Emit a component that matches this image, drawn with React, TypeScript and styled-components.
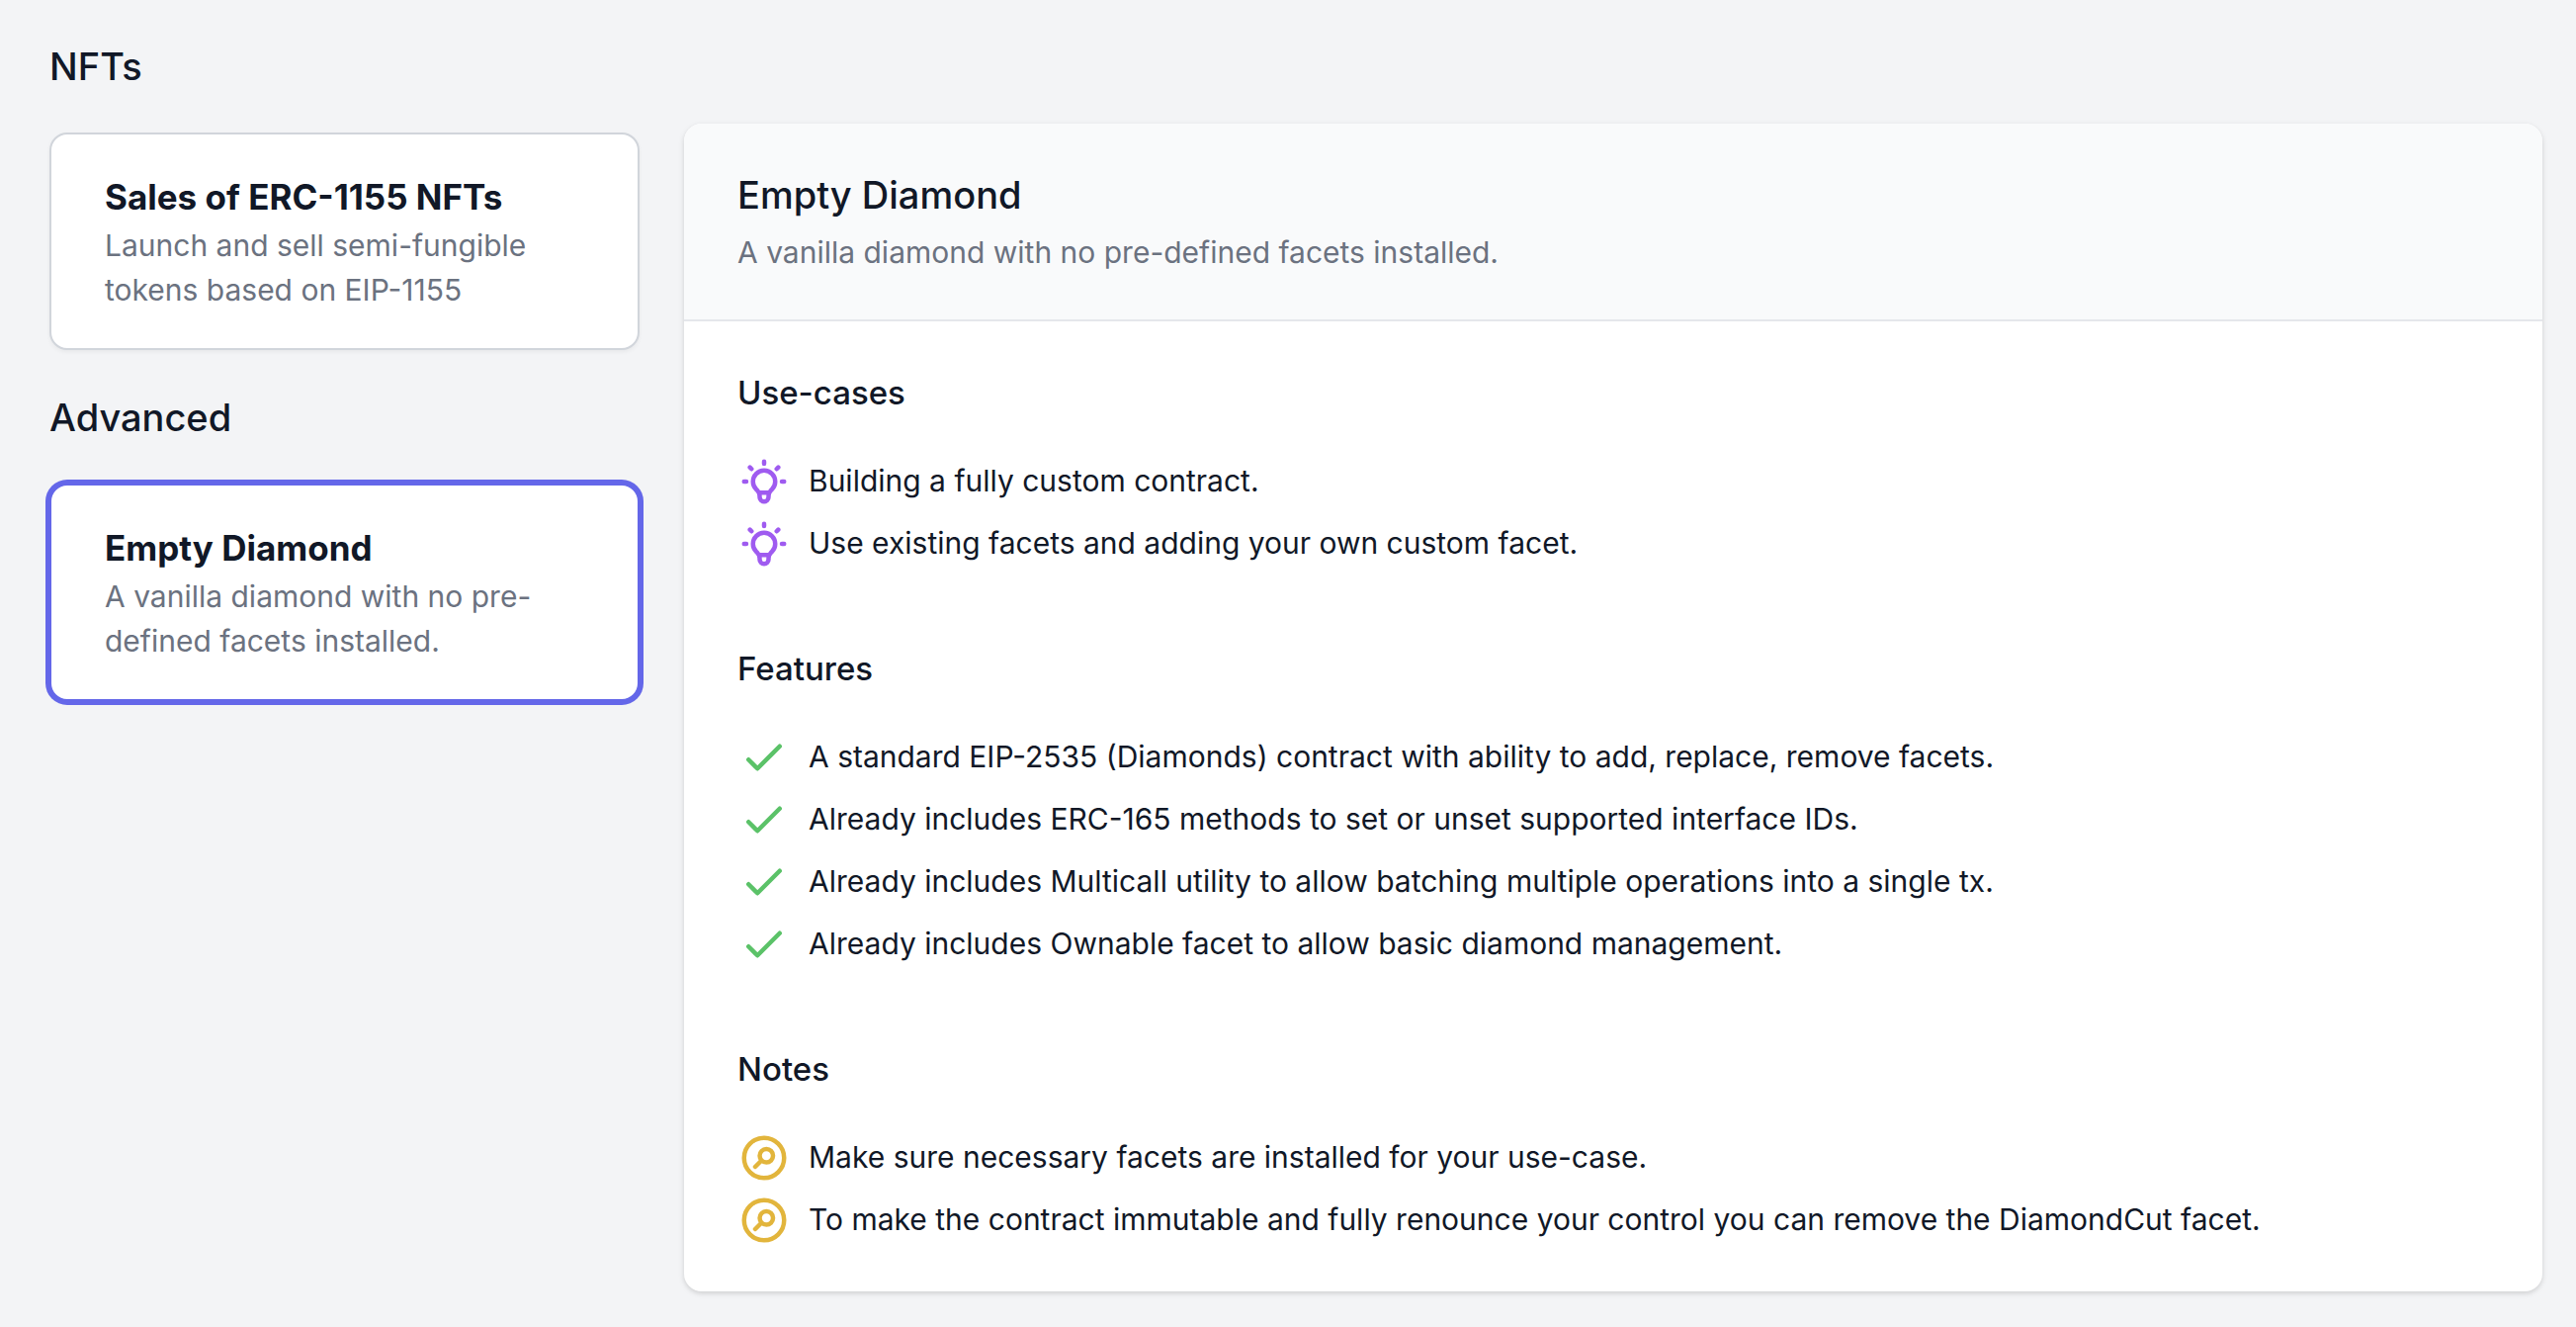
import React, { useState } from "react";
import styled, { createGlobalStyle } from "styled-components";

const GlobalStyle = createGlobalStyle`
  *, *::before, *::after { box-sizing: border-box; }
  body {
    margin: 0;
    background: #f3f4f6;
    color: #111827;
    font-family: Inter, "Liberation Sans", sans-serif;
    font-size: 30px;
    line-height: 45px;
    -webkit-font-smoothing: antialiased;
  }
  h1, h2, h3, p, ul { margin: 0; padding: 0; }
`;

const Page = styled.main`
  display: grid;
  grid-template-columns: 597px minmax(0, 1fr);
  column-gap: 45px;
  align-items: start;
  padding: 40px 34px 36px 50px;
`;

const Sidebar = styled.nav`
  display: flex;
  flex-direction: column;
  gap: 41px;
`;

const Group = styled.section`
  display: flex;
  flex-direction: column;
  gap: 40px;
`;

const LargeTitle = styled.h2`
  font-size: 38px;
  line-height: 54px;
  font-weight: 500;
`;

const ContractCard = styled.button<{ $selected: boolean }>`
  display: block;
  width: 100%;
  padding: 36px 54px;
  border: 2px solid ${(p) => (p.$selected ? "#6467e9" : "#d1d5db")};
  border-radius: 18px;
  background: #fff;
  box-shadow: ${(p) =>
    p.$selected ? "0 0 0 4px #6467e9" : "0 2px 4px rgba(0, 0, 0, 0.05)"};
  color: inherit;
  font: inherit;
  text-align: left;
  cursor: pointer;
`;

const CardTitle = styled.span`
  display: block;
  font-size: 35px;
  line-height: 54px;
  font-weight: 700;
`;

const Description = styled.span`
  display: block;
  color: #6b7280;
`;

const Panel = styled.article`
  margin-top: 85px;
  border-radius: 18px;
  background: #fff;
  box-shadow: 0 2px 6px rgba(0, 0, 0, 0.1), 0 2px 4px rgba(0, 0, 0, 0.06);
  overflow: hidden;
`;

const PanelHeader = styled.header`
  display: flex;
  flex-direction: column;
  gap: 9px;
  padding: 45px 54px;
  border-bottom: 2px solid #e5e7eb;
  background: #f9fafb;
`;

const PanelBody = styled.div`
  display: flex;
  flex-direction: column;
  gap: 68px;
  padding: 45px 54px 41px;
`;

const SectionTitle = styled.h3`
  margin-bottom: 31px;
  font-size: 33px;
  line-height: 54px;
  font-weight: 500;
`;

const List = styled.ul`
  list-style: none;
`;

const Item = styled.li`
  display: flex;
  align-items: center;
  gap: 18px;
  min-height: 63px;
`;

const Icon = styled.svg<{ $color: string }>`
  flex: none;
  width: 54px;
  height: 54px;
  fill: none;
  stroke: ${(p) => p.$color};
  stroke-width: 2;
  stroke-linecap: round;
  stroke-linejoin: round;
`;

const groups = [
  {
    title: "NFTs",
    cards: [
      {
        name: "Sales of ERC-1155 NFTs",
        text: "Launch and sell semi-fungible tokens based on EIP-1155",
      },
    ],
  },
  {
    title: "Advanced",
    cards: [
      {
        name: "Empty Diamond",
        text: "A vanilla diamond with no pre-defined facets installed.",
      },
    ],
  },
];

const sections = [
  {
    title: "Use-cases",
    color: "#9f5bf0",
    path: "M9.663 17h4.673M12 3v1m6.364 1.636l-.707.707M21 12h-1M4 12H3m3.343-5.657l-.707-.707m2.828 9.9a5 5 0 117.072 0l-.548.547A3.374 3.374 0 0014 18.469V19a2 2 0 11-4 0v-.531c0-.895-.356-1.754-.988-2.386l-.548-.547z",
    items: [
      "Building a fully custom contract.",
      "Use existing facets and adding your own custom facet.",
    ],
  },
  {
    title: "Features",
    color: "#5bc268",
    path: "M5 13l4 4L19 7",
    items: [
      "A standard EIP-2535 (Diamonds) contract with ability to add, replace, remove facets.",
      "Already includes ERC-165 methods to set or unset supported interface IDs.",
      "Already includes Multicall utility to allow batching multiple operations into a single tx.",
      "Already includes Ownable facet to allow basic diamond management.",
    ],
  },
  {
    title: "Notes",
    color: "#e2b53c",
    path: "M8 16l2.879-2.879m0 0a3 3 0 104.243-4.242 3 3 0 00-4.243 4.242zM21 12a9 9 0 11-18 0 9 9 0 0118 0z",
    items: [
      "Make sure necessary facets are installed for your use-case.",
      "To make the contract immutable and fully renounce your control you can remove the DiamondCut facet.",
    ],
  },
];

export default function App() {
  const [selected, setSelected] = useState("Empty Diamond");

  return (
    <>
      <GlobalStyle />
      <Page>
        <Sidebar aria-label="Contract types">
          {groups.map((group) => (
            <Group key={group.title}>
              <LargeTitle>{group.title}</LargeTitle>
              {group.cards.map((card) => (
                <ContractCard
                  key={card.name}
                  type="button"
                  $selected={card.name === selected}
                  aria-pressed={card.name === selected}
                  onClick={() => setSelected(card.name)}
                >
                  <CardTitle>{card.name}</CardTitle>
                  <Description>{card.text}</Description>
                </ContractCard>
              ))}
            </Group>
          ))}
        </Sidebar>
        <Panel>
          <PanelHeader>
            <LargeTitle as="h1">Empty Diamond</LargeTitle>
            <Description as="p">
              A vanilla diamond with no pre-defined facets installed.
            </Description>
          </PanelHeader>
          <PanelBody>
            {sections.map((section) => (
              <section key={section.title}>
                <SectionTitle>{section.title}</SectionTitle>
                <List>
                  {section.items.map((item) => (
                    <Item key={item}>
                      <Icon
                        $color={section.color}
                        viewBox="0 0 24 24"
                        aria-hidden="true"
                      >
                        <path d={section.path} />
                      </Icon>
                      {item}
                    </Item>
                  ))}
                </List>
              </section>
            ))}
          </PanelBody>
        </Panel>
      </Page>
    </>
  );
}
